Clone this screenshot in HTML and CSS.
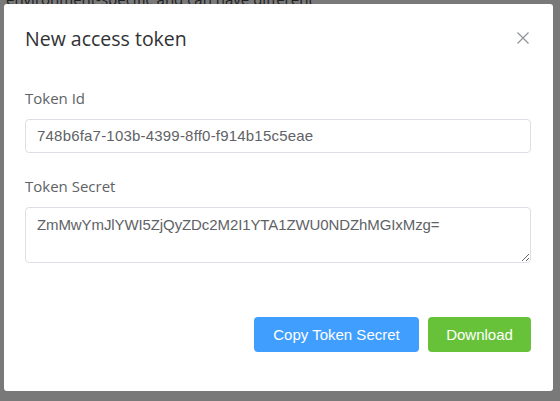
FILE: index.html
```html
<!DOCTYPE html>
<html>
<head>
<meta charset="utf-8">
<link rel="stylesheet" href="styles.css">
</head>
<body>
<div class="page">
  <p class="page-text">environment-specific and can have different</p>
</div>
<div class="overlay">
  <div class="dialog">
    <div class="dialog-header">
      <span class="dialog-title">New access token</span>
      <button class="dialog-close" aria-label="Close">
        <svg width="12" height="12" viewBox="0 0 12 12"><path d="M0.5 0.5 L11.5 11.5 M11.5 0.5 L0.5 11.5" stroke="#909399" stroke-width="1.2" fill="none"/></svg>
      </button>
    </div>
    <div class="dialog-body">
      <div class="field">
        <label class="field-label">Token Id</label>
        <div class="input">748b6fa7-103b-4399-8ff0-f914b15c5eae</div>
      </div>
      <div class="field field-secret">
        <label class="field-label">Token Secret</label>
        <textarea class="textarea" readonly>ZmMwYmJlYWI5ZjQyZDc2M2I1YTA1ZWU0NDZhMGIxMzg=</textarea>
      </div>
    </div>
    <div class="dialog-footer">
      <button class="btn btn-primary">Copy Token Secret</button>
      <button class="btn btn-success">Download</button>
    </div>
  </div>
</div>
</body>
</html>
```

FILE: styles.css
```css
html, body {
  margin: 0;
  padding: 0;
}
body {
  width: 560px;
  height: 401px;
  overflow: hidden;
  position: relative;
  background: #f2f2f2;
  font-family: "Open Sans", "Noto Sans", sans-serif;
}
.page {
  padding: 0 6px;
}
.page-text {
  margin: -11px 0 0 0;
  font-size: 15px;
  line-height: 20px;
  color: #444;
  font-family: "Open Sans", sans-serif;
}
.overlay {
  position: absolute;
  inset: 0;
  background: rgba(0, 0, 0, 0.5);
}
.dialog {
  position: absolute;
  left: 4px;
  top: 4px;
  width: 549px;
  height: 387px;
  background: #fff;
  border-radius: 3px;
  box-sizing: border-box;
  display: flex;
  flex-direction: column;
}
.dialog-header {
  padding: 23px 22px 0 21px;
  position: relative;
}
.dialog-title {
  display: block;
  font-size: 19.5px;
  line-height: 24px;
  color: #303133;
}
.dialog-close {
  position: absolute;
  right: 23px;
  top: 27px;
  width: 14px;
  height: 14px;
  padding: 1px;
  border: 0;
  background: transparent;
  display: flex;
  align-items: center;
  justify-content: center;
}
.dialog-body {
  padding: 37px 22px 0 21px;
  display: flex;
  flex-direction: column;
  gap: 23px;
}
.field {
  display: flex;
  flex-direction: column;
  gap: 11px;
}
.field-label {
  font-size: 15px;
  line-height: 20px;
  color: #606266;
}
.input, .textarea {
  box-sizing: border-box;
  width: 100%;
  border: 1px solid #dcdfe6;
  border-radius: 4px;
  background: #fff;
  color: #606266;
  font-family: "Liberation Sans", Arial, sans-serif;
  font-size: 15px;
  letter-spacing: 0.2px;
}
.input {
  height: 34px;
  line-height: 32px;
  padding: 0 11px;
}
.textarea {
  display: block;
  height: 56px;
  padding: 7px 11px;
  line-height: 20px;
  letter-spacing: -0.1px;
  resize: vertical;
  outline: none;
  margin: 0;
}
.dialog-footer {
  margin-top: auto;
  padding: 0 22px 39px 21px;
  display: flex;
  justify-content: flex-end;
  gap: 9px;
}
.btn {
  height: 35px;
  border: 0;
  border-radius: 4px;
  color: #fff;
  font-family: "Liberation Sans", Arial, sans-serif;
  font-size: 15px;
  padding: 0 17px;
}
.btn-primary {
  background: #409eff;
  width: 165px;
}
.btn-success {
  background: #67c23a;
  width: 103px;
}
```
